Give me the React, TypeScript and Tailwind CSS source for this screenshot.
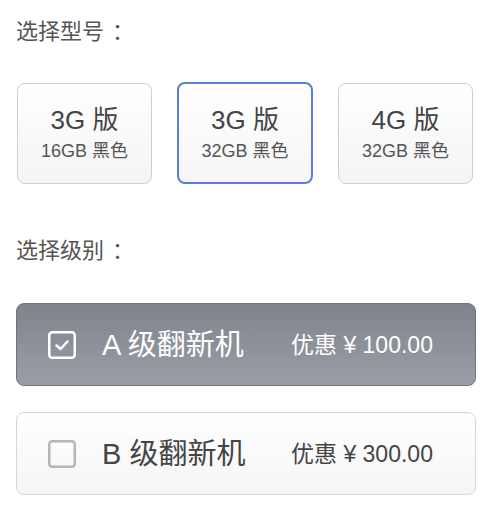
import React from 'react';

const font = { fontFamily: '"Liberation Sans", "Noto Sans CJK SC", sans-serif' };

interface Model {
  name: string;
  spec: string;
  active?: boolean;
}

const models: Model[] = [
  { name: '3G 版', spec: '16GB 黑色' },
  { name: '3G 版', spec: '32GB 黑色', active: true },
  { name: '4G 版', spec: '32GB 黑色' },
];

function ModelCard({ name, spec, active }: Model) {
  return (
    <div
      className={
        active
          ? 'flex h-[102px] w-[136px] flex-col items-center justify-center rounded-[8px] border-2 border-[#5b7fd6] bg-gradient-to-b from-white to-[#f6f6f6]'
          : 'flex h-[101px] w-[135px] flex-col items-center justify-center rounded-[8px] border border-[#cfcfcf] bg-gradient-to-b from-white to-[#f4f4f4]'
      }
    >
      <span className="text-[26px] leading-[32px] text-[#444]">{name}</span>
      <span className="mt-[4px] text-[18px] leading-[22px] text-[#555]">{spec}</span>
    </div>
  );
}

function CheckIcon({ checked }: { checked: boolean }) {
  if (checked) {
    return (
      <svg width="28" height="28" viewBox="0 0 28 28" className="shrink-0">
        <rect x="1.25" y="1.25" width="25.5" height="25.5" rx="3" fill="none" stroke="#fff" strokeWidth="2.5" />
        <path d="M8.5 14.5 L12.5 18 L19.5 10.5" fill="none" stroke="#fff" strokeWidth="2.5" strokeLinecap="round" strokeLinejoin="round" />
      </svg>
    );
  }
  return (
    <svg width="28" height="28" viewBox="0 0 28 28" className="shrink-0">
      <rect x="1.25" y="1.25" width="25.5" height="25.5" rx="3" fill="none" stroke="#b5b5b5" strokeWidth="2.5" />
    </svg>
  );
}

function GradeRow({ grade, price, active }: { grade: string; price: string; active?: boolean }) {
  return (
    <div
      className={
        active
          ? 'flex h-[83px] w-[460px] items-center rounded-[8px] border border-[#6f737a] bg-gradient-to-b from-[#7f838b] to-[#9a9ea6] pl-[31px] text-white'
          : 'flex h-[83px] w-[460px] items-center rounded-[8px] border border-[#d6d6d6] bg-gradient-to-b from-white to-[#f5f5f5] pl-[31px] text-[#444]'
      }
    >
      <CheckIcon checked={!!active} />
      <span className="ml-[26px] w-[189px] text-[29px] leading-[34px]">{grade}</span>
      <span className="text-[23px] leading-[28px]">{price}</span>
    </div>
  );
}

function Title({ children }: { children: React.ReactNode }) {
  return (
    <div className="text-[22px] leading-[30px] text-[#555]">
      {children}
      <span className="ml-[8px]">：</span>
    </div>
  );
}

export default function App() {
  return (
    <div className="h-[522px] w-[500px] bg-white px-[16px] pt-[17px]" style={font}>
      <Title>选择型号</Title>
      <div className="mt-[35px] flex w-[457px] items-center justify-between pl-[1px]">
        {models.map((m, i) => (
          <ModelCard key={i} {...m} />
        ))}
      </div>
      <div className="mt-[52px]">
        <Title>选择级别</Title>
      </div>
      <div className="mt-[37px] flex flex-col gap-[26px]">
        <GradeRow grade="A 级翻新机" price="优惠 ¥ 100.00" active />
        <GradeRow grade="B 级翻新机" price="优惠 ¥ 300.00" />
      </div>
    </div>
  );
}
